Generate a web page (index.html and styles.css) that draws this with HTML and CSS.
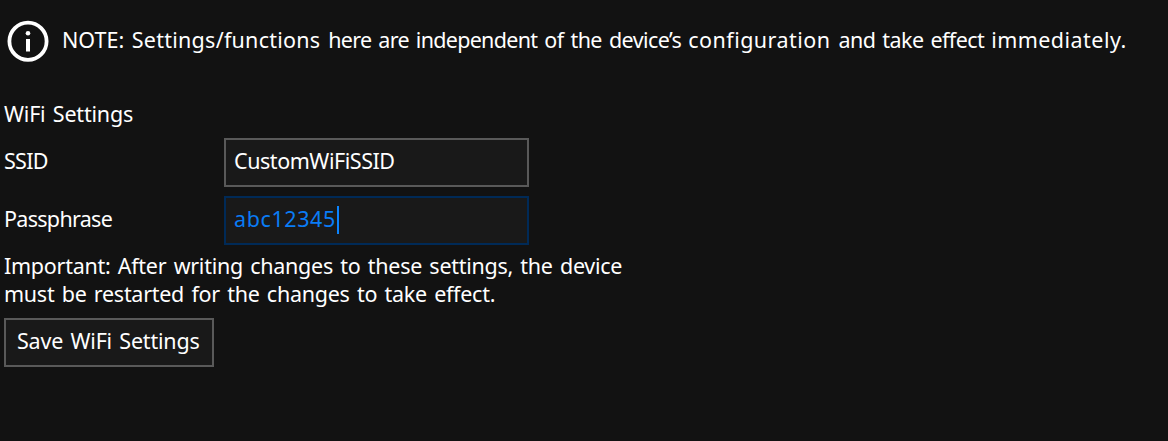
FILE: index.html
```html
<!DOCTYPE html>
<html lang="en">
<head>
<meta charset="utf-8">
<title>WiFi Settings</title>
<link rel="stylesheet" href="styles.css">
</head>
<body>
<main class="page">
  <div class="note">
    <svg class="note-icon" viewBox="0 0 42 42" aria-hidden="true">
      <circle cx="21" cy="21.3" r="18.6" fill="none" stroke="#fff" stroke-width="3.8"/>
      <circle cx="21" cy="13.2" r="2.3" fill="#fff"/>
      <rect x="19" y="19" width="4" height="12.5" fill="#fff"/>
    </svg>
    <p class="note-text">NOTE: <span class="loose">Settings/functions </span><span class="tight">here are independent </span><span class="snug">of the device’s </span><span class="wide">configuration </span><span class="snug">and take effect </span><span class="wide">immediately.</span></p>
  </div>
  <h1 class="heading">WiFi Settings</h1>
  <div class="row">
    <span class="label">SSID</span>
    <div class="field"><span class="ssid-value">CustomWiFiSSID</span></div>
  </div>
  <div class="row">
    <span class="label">Passphrase</span>
    <div class="field focused"><span class="pass-value">abc12345</span><i class="caret"></i></div>
  </div>
  <p class="important">Important: After writing changes to these settings, the device<br>must be restarted for the changes to take effect.</p>
  <button class="save" type="button">Save WiFi Settings</button>
</main>
</body>
</html>
```
FILE: styles.css
```css
* { box-sizing: border-box; }
body {
  margin: 0;
  background: #121212;
  color: #fff;
  font: 21.5px/28px "Noto Sans", sans-serif;
}
p, h1 { margin: 0; font: inherit; }
.page { height: 441px; padding: 20px 4px 0; overflow: hidden; white-space: nowrap; word-spacing: 2px; }
.note { display: flex; align-items: center; gap: 12px; height: 42px; padding-left: 3px; }
.note-icon { flex: none; width: 42px; height: 42px; }
.note-text { padding: 0 0 2px 1px; }
.loose { letter-spacing: .26px; }
.tight { letter-spacing: -.7px; }
.snug { letter-spacing: -.58px; }
.wide { letter-spacing: .46px; }
.heading { margin: 38px 0 10px; letter-spacing: -.2px; }
.row { display: flex; height: 49px; margin-bottom: 9px; }
.label { width: 220px; padding-top: 9px; letter-spacing: -.7px; }
.field { display: flex; width: 305px; padding: 7px 8px; border: 2px solid #595959; background: #191919; }
.ssid-value { letter-spacing: -.45px; }
.pass-value { letter-spacing: .6px; }
.focused { border-color: #002a57; color: #0a7cf5; }
.caret { width: 2px; height: 28px; margin: 1px 0 0 1px; background: #0a84ff; }
.important { margin-top: -2px; letter-spacing: -.27px; }
.save { display: block; width: 210px; height: 49px; margin-top: 10px; padding: 0 0 3px 11px; border: 2px solid #595959; background: #191919; color: #fff; font: inherit; text-align: left; word-spacing: 2px; letter-spacing: -.2px; }
```
